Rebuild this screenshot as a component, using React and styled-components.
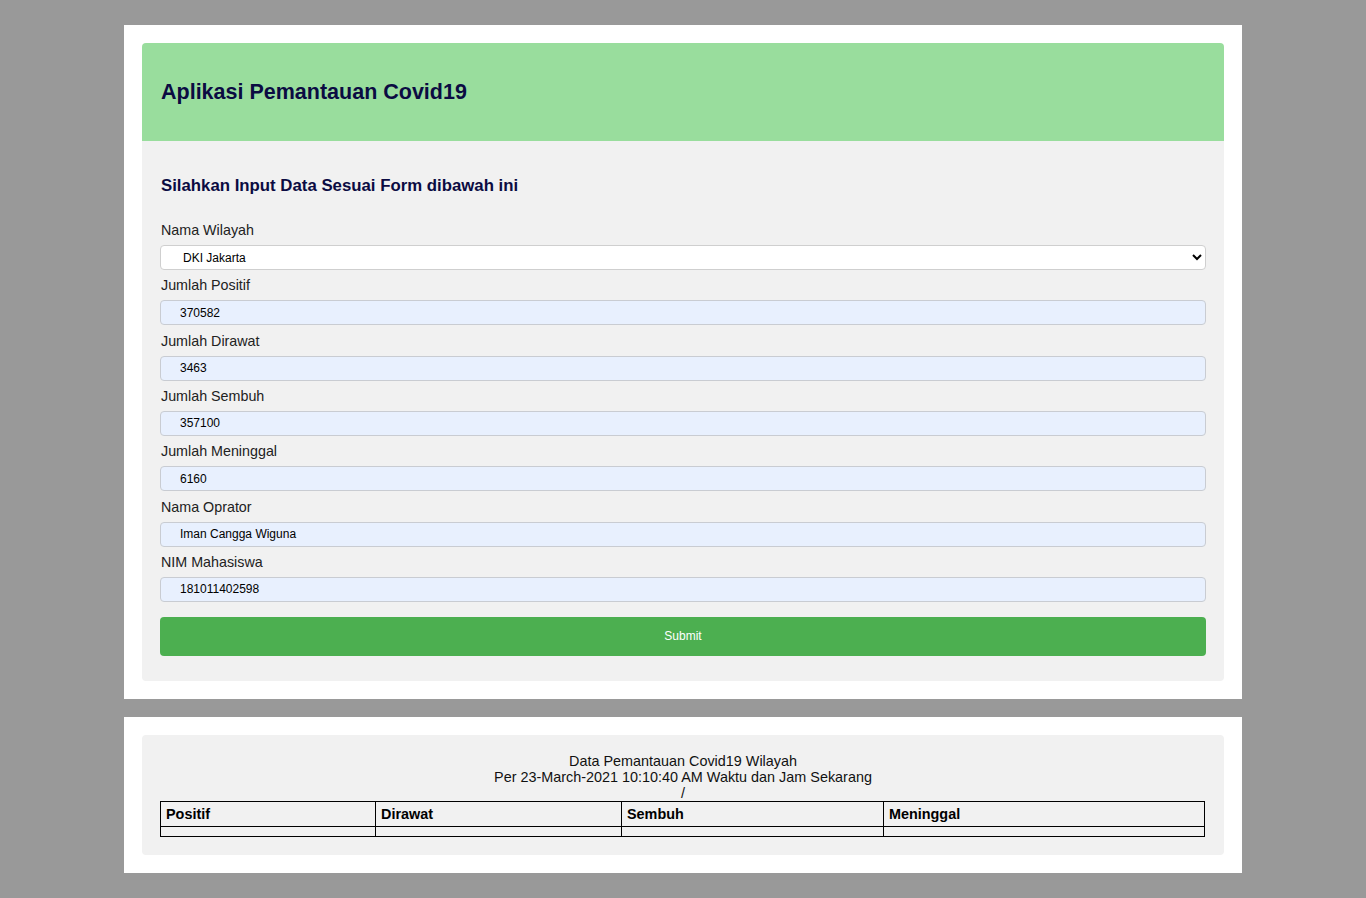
import React from "react";
import styled, { createGlobalStyle } from "styled-components";

const Global = createGlobalStyle`
  html, body { margin: 0; padding: 0; background: #999999; }
  body { font-family: "Liberation Sans", Arial, sans-serif; padding: 25px 0; }
  * { box-sizing: border-box; }
`;

const Card = styled.section`
  width: 1118px;
  margin: 0 auto ${(p) => (p.$last ? "0" : "18px")};
  background: #ffffff;
  padding: 18px;
`;

const Header = styled.header`
  height: 98px;
  background: #99dd9d;
  border-radius: 4px 4px 0 0;
  display: flex;
  align-items: center;
  padding: 0 19px;
`;

const Title = styled.h1`
  margin: 0;
  font-size: 21.5px;
  font-weight: bold;
  color: #0b0b42;
`;

const Panel = styled.div`
  background: #f1f1f1;
  border-radius: ${(p) => (p.$round ? "4px" : "0 0 4px 4px")};
  padding: ${(p) => p.$pad};
`;

const Subtitle = styled.h2`
  margin: 0 0 26px 1px;
  font-size: 16.8px;
  line-height: 20px;
  font-weight: bold;
  color: #0b0b42;
`;

const Form = styled.form`
  display: flex;
  flex-direction: column;
`;

const Label = styled.label`
  display: block;
  font-size: 14.3px;
  line-height: 16px;
  color: #222;
  margin: 0 0 7px 1px;
`;

const Select = styled.select`
  height: 25px;
  width: 100%;
  margin-bottom: 7.33px;
  border: 1px solid #cfcfcf;
  border-radius: 4px;
  background: #ffffff;
  font-family: "Liberation Sans", Arial, sans-serif;
  font-size: 12px;
  color: #000;
  padding: 0 6px 0 18px;
`;

const Input = styled.input`
  height: 25px;
  width: 100%;
  margin-bottom: ${(p) => (p.$lastField ? "15px" : "7.33px")};
  border: 1px solid #c9ccd2;
  border-radius: 4px;
  background: #e8f0fe;
  font-family: "Liberation Sans", Arial, sans-serif;
  font-size: 12px;
  color: #000;
  padding: 0 0 0 19px;
`;

const Button = styled.button`
  height: 39px;
  width: 100%;
  border: none;
  border-radius: 4px;
  background: #4caf50;
  color: #ffffff;
  font-family: "Liberation Sans", Arial, sans-serif;
  font-size: 12px;
`;

const Caption = styled.div`
  text-align: center;
  font-size: 14.4px;
  line-height: 16px;
  color: #111;
`;

const Table = styled.table`
  width: 1044px;
  border-collapse: collapse;
  table-layout: fixed;
  border: 1px solid #000;
`;

const Col = styled.col`
  width: ${(p) => p.$w}px;
`;

const Th = styled.th`
  border: 1px solid #000;
  text-align: left;
  font-size: 14.4px;
  font-weight: bold;
  color: #000;
  padding: 4px 5px;
  height: 25px;
`;

const Td = styled.td`
  border: 1px solid #000;
  height: 10px;
  padding: 0;
`;

const fields = [
  ["Jumlah Positif", "370582"],
  ["Jumlah Dirawat", "3463"],
  ["Jumlah Sembuh", "357100"],
  ["Jumlah Meninggal", "6160"],
  ["Nama Oprator", "Iman Cangga Wiguna"],
  ["NIM Mahasiswa", "181011402598"],
];

const cols = [
  ["Positif", 215],
  ["Dirawat", 246],
  ["Sembuh", 262],
  ["Meninggal", 321],
];

export default function App() {
  return (
    <>
      <Global />
      <Card>
        <Header>
          <Title>Aplikasi Pemantauan Covid19</Title>
        </Header>
        <Panel $pad="35px 18px 25px">
          <Subtitle>Silahkan Input Data Sesuai Form dibawah ini</Subtitle>
          <Form onSubmit={(e) => e.preventDefault()}>
            <Label>Nama Wilayah</Label>
            <Select defaultValue="DKI Jakarta">
              <option>DKI Jakarta</option>
            </Select>
            {fields.map(([label, value], i) => (
              <React.Fragment key={label}>
                <Label>{label}</Label>
                <Input defaultValue={value} $lastField={i === fields.length - 1} />
              </React.Fragment>
            ))}
            <Button type="submit">Submit</Button>
          </Form>
        </Panel>
      </Card>
      <Card $last>
        <Panel $round $pad="18px">
          <Caption>
            Data Pemantauan Covid19 Wilayah
            <br />
            Per 23-March-2021 10:10:40 AM Waktu dan Jam Sekarang
            <br />/
          </Caption>
          <Table>
            <colgroup>
              {cols.map(([n, w]) => (
                <Col key={n} $w={w} />
              ))}
            </colgroup>
            <thead>
              <tr>
                {cols.map(([n]) => (
                  <Th key={n}>{n}</Th>
                ))}
              </tr>
            </thead>
            <tbody>
              <tr>
                {cols.map(([n]) => (
                  <Td key={n} />
                ))}
              </tr>
            </tbody>
          </Table>
        </Panel>
      </Card>
    </>
  );
}
